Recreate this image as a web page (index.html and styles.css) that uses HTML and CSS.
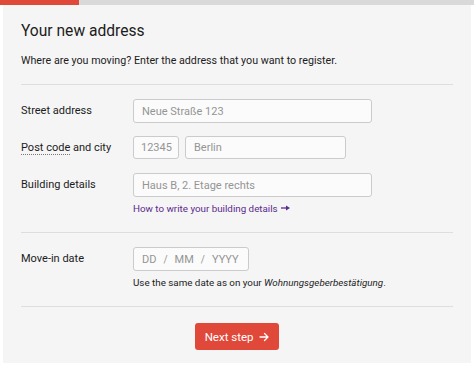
FILE: index.html
```html
<!DOCTYPE html>
<html>
<head>
    <link rel="stylesheet" href="styles.css">
</head>
<body>
  <div class="progress">
    <div class="progress-fill"></div>
  </div>

  <form class="card">
    <h1 class="title">Your new address</h1>
    <p class="intro">Where are you moving? Enter the address that you want to register.</p>

    <div class="section">
      <div class="row">
        <label class="label">Street address</label>
        <div class="field">
          <input class="input input-wide" type="text" placeholder="Neue Straße 123">
        </div>
      </div>

      <div class="row">
        <label class="label"><abbr class="abbr" title="Postleitzahl">Post code</abbr> and city</label>
        <div class="field field-inline">
          <input class="input input-zip" type="text" placeholder="12345">
          <input class="input input-city" type="text" placeholder="Berlin">
        </div>
      </div>

      <div class="row">
        <label class="label">Building details</label>
        <div class="field">
          <input class="input input-wide" type="text" placeholder="Haus B, 2. Etage rechts">
          <a class="help-link" href="#">How to write your building details
            <svg class="link-arrow" width="9" height="6" viewBox="0 0 9 6"><path d="M0 3h6" stroke="currentColor" stroke-width="1.3"/><path d="M5 0.5L9 3L5 5.5z" fill="currentColor"/></svg>
          </a>
        </div>
      </div>
    </div>

    <div class="section">
      <div class="row">
        <label class="label">Move-in date</label>
        <div class="field">
          <div class="date-input">
            <span>DD</span><span class="sep">/</span><span>MM</span><span class="sep">/</span><span>YYYY</span>
          </div>
          <p class="hint">Use the same date as on your <em>Wohnungsgeberbestätigung</em>.</p>
        </div>
      </div>
    </div>

    <div class="actions">
      <button class="button" type="button">Next step
        <svg class="button-arrow" width="10" height="10" viewBox="0 0 10 10"><path d="M1 5h8M5.5 1.5L9 5L5.5 8.5" fill="none" stroke="currentColor" stroke-width="1.3" stroke-linecap="round" stroke-linejoin="round"/></svg>
      </button>
    </div>
  </form>
</body>
</html>
```

FILE: styles.css
```css
body {
    margin: 0;
    background: #fff;
    font-family: "Roboto", "Liberation Sans", sans-serif;
    color: #1c1c1c;
}

.progress {
    height: 5px;
    background: #d9d9d9;
}

.progress-fill {
    width: 79px;
    height: 100%;
    background: #e0483a;
}

.card {
    margin: 0 3px;
    padding: 14px 18px 13px;
    background: #f5f5f5;
}

.title {
    margin: 0;
    font-size: 15.6px;
    font-weight: 400;
    line-height: 24px;
}

.intro {
    margin: 10px 0 0;
    font-size: 10.7px;
    line-height: 16px;
    padding-bottom: 15px;
    border-bottom: 1px solid #dedede;
}

.section {
    padding: 14px 0 17px;
    border-bottom: 1px solid #dedede;
    display: flex;
    flex-direction: column;
    gap: 13px;
}

.row {
    display: grid;
    grid-template-columns: 112px 1fr;
    align-items: start;
}

.label {
    font-size: 11px;
    line-height: 24px;
}

.abbr {
    text-decoration: none;
    border-bottom: 1px dotted #777;
}

.field {
    display: flex;
    flex-direction: column;
}

.field-inline {
    flex-direction: row;
    gap: 6px;
}

.input {
    box-sizing: border-box;
    height: 24px;
    padding: 0 8px;
    border: 1px solid #cbcbcb;
    border-radius: 3px;
    background: #fbfbfb;
    font-family: inherit;
    font-size: 11px;
    color: #1c1c1c;
}

.input::placeholder {
    color: #959595;
}

.input-wide {
    width: 239px;
}

.input-zip {
    width: 46px;
    height: 23px;
    padding: 0 5px 0 7px;
}

.input-city {
    width: 161px;
    height: 23px;
}

.help-link {
    margin-top: 6px;
    font-size: 9.8px;
    line-height: 12px;
    color: #5b2a8c;
    text-decoration: none;
}

.link-arrow {
    margin-left: 1px;
    vertical-align: 1px;
}

.date-input {
    box-sizing: border-box;
    width: 116px;
    height: 24px;
    padding: 0 8px;
    border: 1px solid #cbcbcb;
    border-radius: 3px;
    background: #fbfbfb;
    display: flex;
    align-items: center;
    gap: 7px;
    font-size: 11px;
    color: #959595;
}

.sep {
    font-size: 10px;
}

.hint {
    margin: 6px 0 0;
    font-size: 9.8px;
    line-height: 12px;
}

.actions {
    display: flex;
    justify-content: center;
    padding-top: 16px;
}

.button {
    width: 84px;
    height: 27px;
    border: none;
    border-radius: 3px;
    background: #e0483a;
    color: #fff;
    font-family: inherit;
    font-size: 11.5px;
    cursor: pointer;
}

.button-arrow {
    margin-left: 3px;
    vertical-align: -1px;
}
```
